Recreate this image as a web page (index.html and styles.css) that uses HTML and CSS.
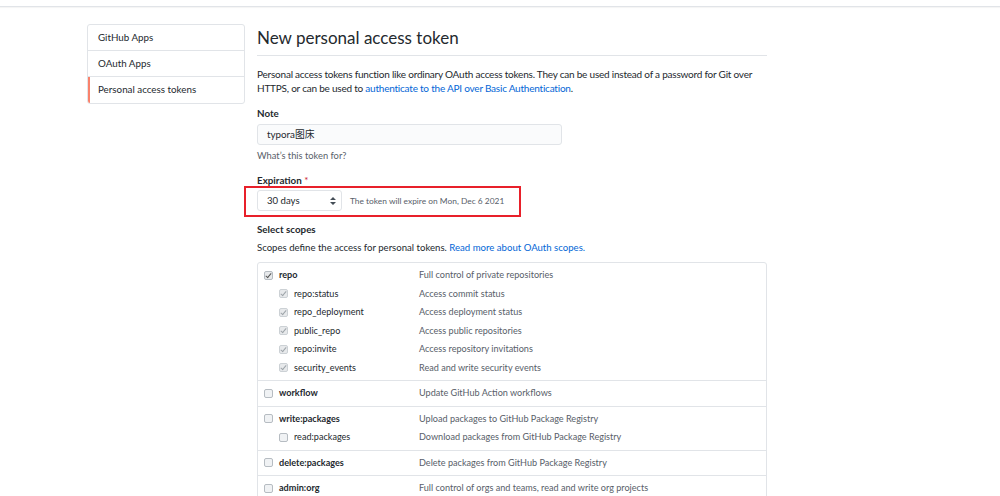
FILE: index.html
```html
<!DOCTYPE html>
<html>
<head>
<meta charset="utf-8">
<link rel="stylesheet" href="styles.css">
</head>
<body>
<div class="topbar"></div>
<div class="layout">
  <nav class="menu">
    <div class="menu-item">GitHub Apps</div>
    <div class="menu-item">OAuth Apps</div>
    <div class="menu-item selected">Personal access tokens</div>
  </nav>
  <main class="main">
    <h2 class="title">New personal access token</h2>
    <p class="intro">Personal access tokens function like ordinary OAuth access tokens. They can be used instead of a password for Git over HTTPS, or can be used to <a href="#">authenticate to the API over Basic Authentication</a>.</p>

    <div class="label">Note</div>
    <div class="input">typora图床</div>
    <div class="hint">What’s this token for?</div>

    <div class="label">Expiration <span class="req">*</span></div>
    <div class="exp-row">
      <div class="select">30 days
        <svg class="arrows" width="6" height="8" viewBox="0 0 6 8"><path d="M3 0L6 3H0z M3 8L0 5H6z" fill="#444d56"/></svg>
      </div>
      <span class="exp-note">The token will expire on Mon, Dec 6 2021</span>
    </div>

    <div class="label scopes-label">Select scopes</div>
    <p class="scopes-desc">Scopes define the access for personal tokens. <a href="#">Read more about OAuth scopes.</a></p>

    <div class="scopes">
      <div class="group">
        <div class="row top"><span class="name"><span class="cb checked"></span>repo</span><span class="desc">Full control of private repositories</span></div>
        <div class="row sub"><span class="name"><span class="cb dis"></span>repo:status</span><span class="desc">Access commit status</span></div>
        <div class="row sub"><span class="name"><span class="cb dis"></span>repo_deployment</span><span class="desc">Access deployment status</span></div>
        <div class="row sub"><span class="name"><span class="cb dis"></span>public_repo</span><span class="desc">Access public repositories</span></div>
        <div class="row sub"><span class="name"><span class="cb dis"></span>repo:invite</span><span class="desc">Access repository invitations</span></div>
        <div class="row sub"><span class="name"><span class="cb dis"></span>security_events</span><span class="desc">Read and write security events</span></div>
      </div>
      <div class="group">
        <div class="row top"><span class="name"><span class="cb"></span>workflow</span><span class="desc">Update GitHub Action workflows</span></div>
      </div>
      <div class="group">
        <div class="row top"><span class="name"><span class="cb"></span>write:packages</span><span class="desc">Upload packages to GitHub Package Registry</span></div>
        <div class="row sub"><span class="name"><span class="cb"></span>read:packages</span><span class="desc">Download packages from GitHub Package Registry</span></div>
      </div>
      <div class="group">
        <div class="row top"><span class="name"><span class="cb"></span>delete:packages</span><span class="desc">Delete packages from GitHub Package Registry</span></div>
      </div>
      <div class="group">
        <div class="row top"><span class="name"><span class="cb"></span>admin:org</span><span class="desc">Full control of orgs and teams, read and write org projects</span></div>
      </div>
    </div>
  </main>
</div>
</body>
</html>
```

FILE: styles.css
```css
* { box-sizing: border-box; }
html, body { margin: 0; padding: 0; background: #fff; }
body {
  font-family: "Lato", "Noto Sans", "Noto Sans CJK SC", sans-serif;
  font-size: 9.9px;
  color: #24292e;
  overflow: hidden;
  height: 496px;
}
a { color: #0366d6; text-decoration: none; }

.topbar {
  height: 7px;
  border-bottom: 1px solid #e1e4e8;
  box-shadow: 0 1px 1px rgba(0,0,0,0.04);
}

.layout {
  display: flex;
  padding: 17px 0 0 87px;
  gap: 12px;
}

.menu {
  width: 158px;
  flex: none;
  align-self: flex-start;
  border: 1px solid #e1e4e8;
  border-radius: 3px;
  overflow: hidden;
}
.menu-item {
  height: 26px;
  line-height: 25px;
  padding-left: 10px;
  border-bottom: 1px solid #e1e4e8;
  color: #24292e;
  font-size: 9.8px;
}
.menu-item:last-child { border-bottom: none; }
.menu-item.selected {
  border-left: 2px solid #f9826c;
  padding-left: 8px;
}

.main { width: 510px; flex: none; }

.title {
  margin: 2px 0 0;
  font-size: 17px;
  font-weight: 400;
  line-height: 24px;
  padding-bottom: 5px;
  border-bottom: 1px solid #e1e4e8;
}

.intro {
  margin: 11px 0 0;
  line-height: 14px;
  font-size: 10px;
  letter-spacing: -0.22px;
}

.label {
  font-weight: 700;
  font-size: 9.8px;
  line-height: 14px;
  margin-top: 11px;
}
.req { color: #cb2431; font-weight: 400; }

.input {
  margin-top: 4px;
  width: 305px;
  height: 21px;
  line-height: 19px;
  padding-left: 9px;
  background: #fafbfc;
  border: 1px solid #e1e4e8;
  border-radius: 3px;
  font-size: 9.8px;
}

.hint {
  margin-top: 5px;
  font-size: 9.3px;
  line-height: 12px;
  color: #586069;
}

.exp-row {
  position: relative;
  margin-top: 3px;
  display: flex;
  align-items: center;
  gap: 8px;
  height: 21px;
}
.exp-row::before {
  content: "";
  position: absolute;
  left: -13px;
  top: -4px;
  width: 273px;
  height: 27px;
  border: 2px solid #e8202a;
}
.select {
  width: 85px;
  height: 21px;
  line-height: 19px;
  padding-left: 9px;
  border: 1px solid #e1e4e8;
  border-radius: 3px;
  position: relative;
  background: #fff;
  font-size: 9.6px;
}
.arrows { position: absolute; right: 5px; top: 6px; }
.exp-note {
  font-size: 8.4px;
  color: #586069;
}

.scopes-label { margin-top: 11px; }
.scopes-desc {
  margin: 5px 0 0;
  line-height: 14px;
  font-size: 9.6px;
}

.scopes {
  margin-top: 7px;
  border: 1px solid #e1e4e8;
  border-radius: 3px 3px 0 0;
  font-size: 9.1px;
}
.group {
  padding: 3px 0 3px 6px;
  border-bottom: 1px solid #e1e4e8;
}
.group:last-child { border-bottom: none; }
.row {
  display: flex;
  height: 18.5px;
  line-height: 18.5px;
}
.name {
  width: 155px;
  flex: none;
  display: flex;
  align-items: center;
}
.row.top .name { font-weight: 700; }
.row.sub .name { padding-left: 15px; }
.desc { color: #586069; }

.cb {
  width: 9px;
  height: 9px;
  border: 1px solid #b6bcc2;
  border-radius: 2px;
  background: #f0f2f4;
  margin-right: 6px;
  flex: none;
  position: relative;
}
.cb.checked, .cb.dis { background: #e7e9eb; }
.cb.checked::after, .cb.dis::after {
  content: "";
  position: absolute;
  left: 2px;
  top: 0px;
  width: 2px;
  height: 5px;
  border: solid #555;
  border-width: 0 1.5px 1.5px 0;
  transform: rotate(40deg);
}
.cb.dis { border-color: #ccd1d5; }
.cb.dis::after { border-color: #9ea4aa; }
```
